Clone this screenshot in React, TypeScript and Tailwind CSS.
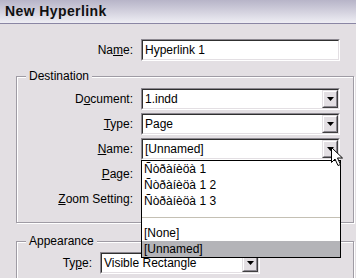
import React from 'react';

const BG = 'bg-[#e3dfe3]';

function Arrow() {
  return (
    <div className="w-[16px] h-[18px] border border-t-[#e3dfe3] border-l-[#e3dfe3] border-r-[#404040] border-b-[#404040]">
      <div className="w-full h-full bg-[#e3dfe3] border border-t-white border-l-white border-r-[#8c8890] border-b-[#8c8890] flex items-center justify-center">
        <svg width="7" height="4" viewBox="0 0 7 4">
          <path d="M0 0H7L3.5 4Z" fill="#000" />
        </svg>
      </div>
    </div>
  );
}

function Field({ text, width, combo = true }: { text: string; width: string; combo?: boolean }) {
  return (
    <div className={`${width} h-[22px] border border-t-[#8c8890] border-l-[#8c8890] border-r-white border-b-white`}>
      <div className="h-full border border-t-[#303030] border-l-[#303030] border-r-[#e3dfe3] border-b-[#e3dfe3] bg-white flex items-center">
        <span className="flex-1 pl-[2px] leading-none whitespace-nowrap">{text}</span>
        {combo && <Arrow />}
      </div>
    </div>
  );
}

function Row({ label, labelW, children }: { label: React.ReactNode; labelW: string; children: React.ReactNode }) {
  return (
    <div className="flex items-center">
      <div className={`${labelW} text-right pr-[8px] whitespace-nowrap`}>{label}</div>
      {children}
    </div>
  );
}

function Group({ title, children, className = '' }: { title: string; children: React.ReactNode; className?: string }) {
  return (
    <div className={`ml-[16px] w-[338px] border border-[#9f9ba4] shadow-[inset_1px_1px_0_#fff,1px_1px_0_#fff] ${className}`}>
      <div className={`-mt-[7px] ml-[9px] px-[3px] w-fit h-[13px] leading-[13px] ${BG}`}>{title}</div>
      {children}
    </div>
  );
}

const U = ({ children }: { children: React.ReactNode }) => (
  <span className="underline underline-offset-[1px]">{children}</span>
);

const pages = ['Ñòðàíèöà 1', 'Ñòðàíèöà 1 2', 'Ñòðàíèöà 1 3'];

export default function App() {
  return (
    <div className={`relative w-[356px] h-[278px] overflow-hidden ${BG} text-[12px] text-black font-['Liberation_Sans',Arial,sans-serif]`}>
      {/* title bar */}
      <div className="h-[24px] bg-gradient-to-b from-[#b7b4c8] to-[#efeef4] border-b border-[#8a86a4] flex items-center pl-[5px] text-[14px] tracking-[0.4px] font-bold text-[#111]">
        New Hyperlink
      </div>

      <div className="mt-[15px]">
        <Row labelW="w-[141px]" label={<>Na<U>m</U>e:</>}>
          <Field text="Hyperlink 1" width="w-[199px]" combo={false} />
        </Row>
      </div>

      <Group title="Destination" className="mt-[15px] pb-[12px]">
        <div className="mt-[5px] flex flex-col gap-[3px]">
          <Row labelW="w-[124px]" label={<>D<U>o</U>cument:</>}>
            <Field text="1.indd" width="w-[199px]" />
          </Row>
          <Row labelW="w-[124px]" label={<><U>T</U>ype:</>}>
            <Field text="Page" width="w-[199px]" />
          </Row>
          <Row labelW="w-[124px]" label={<><U>N</U>ame:</>}>
            <Field text="[Unnamed]" width="w-[199px]" />
          </Row>
          <Row labelW="w-[124px]" label={<><U>P</U>age:</>}>
            <Field text="" width="w-[199px]" />
          </Row>
          <Row labelW="w-[124px]" label={<><U>Z</U>oom Setting:</>}>
            <Field text="" width="w-[199px]" />
          </Row>
        </div>
      </Group>

      <Group title="Appearance" className="mt-[18px] pb-[12px]">
        <div className="mt-[4px]">
          <Row labelW="w-[83px]" label={<>Ty<U>p</U>e:</>}>
            <Field text="Visible Rectangle" width="w-[160px]" />
          </Row>
        </div>
      </Group>

      {/* open dropdown list */}
      <div className="absolute left-[141px] top-[160px] w-[200px] h-[98px] border border-black bg-white flex flex-col">
        {pages.map((p) => (
          <div key={p} className="h-[16px] leading-[16px] pl-[2px] whitespace-nowrap">{p}</div>
        ))}
        <div className="h-[16px] flex items-center">
          <div className="w-full h-px bg-[#c4c0b4]" />
        </div>
        <div className="h-[16px] leading-[16px] pl-[2px]">[None]</div>
        <div className="h-[16px] leading-[16px] pl-[2px] bg-[#b4b4b8]">[Unnamed]</div>
      </div>

      {/* mouse pointer */}
      <svg className="absolute left-[331px] top-[147px]" width="13" height="20" viewBox="0 0 13 20">
        <path d="M0.5 0.5V15.5L4 12L7 18.5L9.5 17.5L6.5 11H11.5Z" fill="#fff" stroke="#000" strokeWidth="1" />
      </svg>
    </div>
  );
}
